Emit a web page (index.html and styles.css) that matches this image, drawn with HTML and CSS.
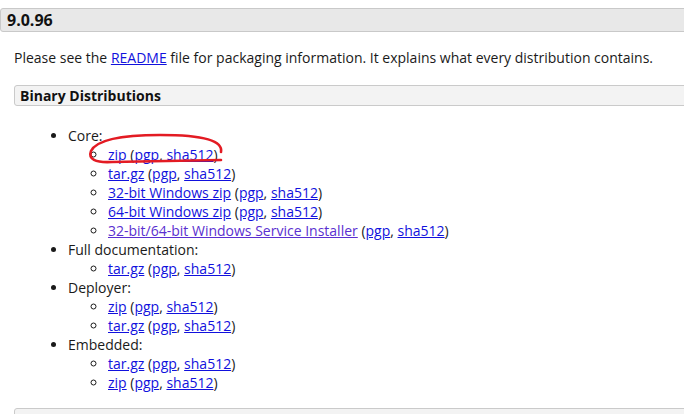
FILE: index.html
```html
<!DOCTYPE html>
<html>
<head>
<meta charset="utf-8">
<link rel="stylesheet" href="styles.css">
</head>
<body>
<div class="page">
  <h3 class="version">9.0.96</h3>
  <div class="section">
    <p class="intro">Please see the <a href="#">README</a> file for packaging information. It explains what every distribution contains.</p>
    <h4 class="subhead">Binary Distributions</h4>
    <ul class="dist">
      <li>Core:
        <ul class="files">
          <li><a href="#">zip</a> (<a href="#">pgp</a>, <a href="#">sha512</a>)</li>
          <li><a href="#">tar.gz</a> (<a href="#">pgp</a>, <a href="#">sha512</a>)</li>
          <li><a href="#">32-bit Windows zip</a> (<a href="#">pgp</a>, <a href="#">sha512</a>)</li>
          <li><a href="#">64-bit Windows zip</a> (<a href="#">pgp</a>, <a href="#">sha512</a>)</li>
          <li><a href="#" class="visited">32-bit/64-bit Windows Service Installer</a> (<a href="#">pgp</a>, <a href="#">sha512</a>)</li>
        </ul>
      </li>
      <li>Full documentation:
        <ul class="files">
          <li><a href="#">tar.gz</a> (<a href="#">pgp</a>, <a href="#">sha512</a>)</li>
        </ul>
      </li>
      <li>Deployer:
        <ul class="files">
          <li><a href="#">zip</a> (<a href="#">pgp</a>, <a href="#">sha512</a>)</li>
          <li><a href="#">tar.gz</a> (<a href="#">pgp</a>, <a href="#">sha512</a>)</li>
        </ul>
      </li>
      <li>Embedded:
        <ul class="files">
          <li><a href="#">tar.gz</a> (<a href="#">pgp</a>, <a href="#">sha512</a>)</li>
          <li><a href="#">zip</a> (<a href="#">pgp</a>, <a href="#">sha512</a>)</li>
        </ul>
      </li>
    </ul>
    <div class="subhead next"></div>
  </div>
  <svg class="mark" width="684" height="414" viewBox="0 0 684 414">
    <path d="M221 152 C223 141 205 135 160 135 C118 135 96 141 91 151 C88 159 95 163 112 162 L221 160" fill="none" stroke="#e31b23" stroke-width="2.6" stroke-linecap="round"/>
  </svg>
</div>
</body>
</html>
```

FILE: styles.css
```css
html, body {
  margin: 0;
  padding: 0;
  background: #fff;
  overflow: hidden;
}
.page {
  position: relative;
  width: 740px;
  height: 414px;
  padding-top: 8px;
  box-sizing: border-box;
  font-family: "Open Sans", "Liberation Sans", sans-serif;
  font-size: 14px;
  line-height: 19px;
  color: #1a1a1a;
}
.version {
  margin: 0;
  padding: 0 6px;
  font-size: 16px;
  line-height: 22px;
  font-weight: bold;
  background: #e8e8e8;
  border: 1px solid #c9c9c9;
  border-radius: 3px;
  color: #111;
}
.section {
  padding-left: 14px;
}
.intro {
  margin: 16px 0 18px;
}
a {
  color: #1111dd;
  text-decoration: underline;
}
a.visited {
  color: #5a2fd0;
}
.subhead {
  margin: 0;
  padding: 0 5px;
  font-size: 14px;
  line-height: 19px;
  font-weight: bold;
  background: #f3f3f3;
  border: 1px solid #cacaca;
  border-radius: 3px;
  color: #111;
}
.next {
  height: 19px;
}
.dist {
  margin: 20px 0 16px;
  padding-left: 54px;
  list-style: disc;
}
.files {
  margin: 0;
  padding-left: 40px;
  list-style: circle;
}
.mark {
  position: absolute;
  left: 0;
  top: 0;
  pointer-events: none;
}
```
